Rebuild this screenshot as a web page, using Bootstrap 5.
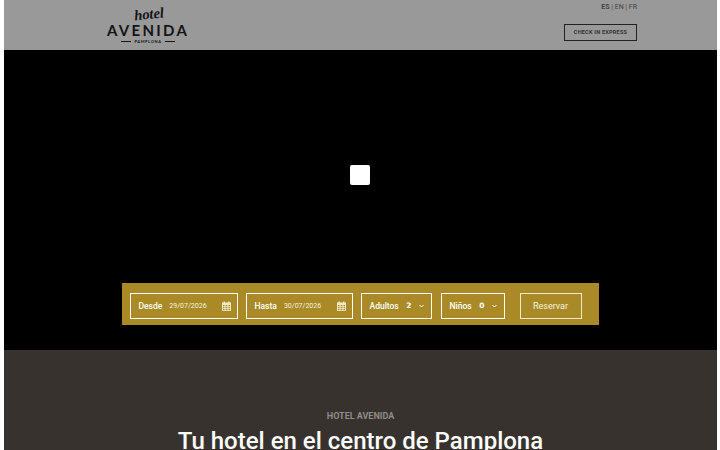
<!DOCTYPE html>
<html lang="es">
<head>
    <meta charset="UTF-8">
    <meta name="viewport" content="width=device-width, initial-scale=1.0">
    <title>Hotel Avenida Pamplona</title>
    <link href="https://cdn.jsdelivr.net/npm/bootstrap@5.3.0/dist/css/bootstrap.min.css" rel="stylesheet">
    <style>
        html, body { height: 450px; overflow: hidden; }
        body { background: #fff; font-family: Roboto, sans-serif; }
        .page-wrap { margin: 0 3px 0 4px; }
        .top-bar { height: 50px; background: #999; padding: 0 80px 0 103px; }
        .logo-box { width: 82px; color: #141414; line-height: 1; }
        .logo-hotel { font: italic 700 14.5px/15px "Liberation Serif", serif; margin-top: 7px; padding-left: 2px; transform: rotate(-6deg); }
        .logo-name { font: 700 15px/15px Lato, sans-serif; letter-spacing: 2.3px; margin-top: 1px; white-space: nowrap; }
        .logo-sub { font: 700 4px/5px Lato, sans-serif; letter-spacing: .6px; gap: 3px; margin-top: 1px; }
        .logo-sub i { width: 10px; height: 1px; background: #141414; }
        .lang-links { font-size: 7px; line-height: 9px; color: #444; margin-top: 3px; }
        .btn-express { width: 73px; height: 17px; margin-top: 12px; border: 1px solid #222; border-radius: 0; padding: 0; font-size: 5.6px; font-weight: 700; line-height: 15px; color: #333; letter-spacing: .2px; }
        .hero-box { height: 300px; background: #000; padding-bottom: 25px; position: relative; }
        .loader-box { position: absolute; left: 346px; top: 115px; width: 20px; height: 20px; background: #fff; border-radius: 2px; }
        .booking-bar { width: 477px; height: 42px; background: #a98a26; padding: 4px 0 0 8px; color: #fff; margin-left: -1px; }
        .book-field { height: 26px; border: 1px solid #fff; padding: 0 5px 0 7px; font-size: 8.5px; font-weight: 500; color: #fff; margin-right: 8px; }
        .field-from { width: 108px; }
        .field-to { width: 107px; }
        .field-num { width: 71px; margin-right: 9px; }
        .field-kids { width: 64px; margin-right: 15px; }
        .book-label { margin-left: 1px; }
        .date-value { font-size: 7px; font-weight: 400; margin-left: 7px; color: #f7f2df; }
        .num-value { font-size: 7.5px; font-weight: 700; margin-left: auto; margin-right: 7px; font-family: "DejaVu Sans", sans-serif; }
        .cal-icon { margin-left: auto; margin-right: 1px; }
        .chevron-icon { margin-right: 2px; }
        .btn-reserve { width: 62px; height: 26px; border: 1px solid #f0e8c8; border-radius: 0; padding: 0; font-size: 9px; line-height: 24px; color: #f7f2df; }
        .intro-box { height: 100px; background: #38322f; padding-top: 60px; overflow: hidden; }
        .intro-kicker { font-size: 9px; font-weight: 700; line-height: 12px; color: #8f8c8a; }
        .intro-title { font-size: 24px; font-weight: 500; line-height: 30px; color: #fff; margin: 4px 0 0; }
    </style>
</head>
<body>
    <div class="page-wrap">
        <header class="top-bar d-flex justify-content-between">
            <div class="logo-box text-center">
                <div class="logo-hotel">hotel</div>
                <div class="logo-name">AVENIDA</div>
                <div class="logo-sub d-flex justify-content-center align-items-center"><i></i>PAMPLONA<i></i></div>
            </div>
            <div class="d-flex flex-column align-items-end">
                <div class="lang-links"><b>ES</b> | EN | FR</div>
                <a href="#" class="btn btn-express text-uppercase">Check in express</a>
            </div>
        </header>

        <section class="hero-box d-flex justify-content-center align-items-end">
            <div class="loader-box"></div>
            <form class="booking-bar d-flex align-items-center">
                <div class="book-field field-from d-flex align-items-center">
                    <span class="book-label">Desde</span> <span class="date-value">29/07/2026</span>
                    <svg class="cal-icon" width="9" height="10" viewBox="0 0 9 10"><path fill="#f0e8c8" d="M0 1.500h1.500V.5h1.500v1h3v-1h1.500v1H9V10H0zM1 4v1.200h1.500V4zm2.700 0v1.200h1.600V4zm2.800 0v1.200H8V4zM1 6v1.200h1.500V6zm2.700 0v1.200h1.600V6zm2.800 0v1.200H8V6zM1 8v1.200h1.500V8zm2.700 0v1.200h1.600V8zm2.800 0v1.200H8V8z" fill-rule="evenodd"/></svg>
                </div>
                <div class="book-field field-to d-flex align-items-center">
                    <span class="book-label">Hasta</span> <span class="date-value">30/07/2026</span>
                    <svg class="cal-icon" width="9" height="10" viewBox="0 0 9 10"><path fill="#f0e8c8" d="M0 1.500h1.500V.5h1.500v1h3v-1h1.500v1H9V10H0zM1 4v1.200h1.500V4zm2.700 0v1.200h1.600V4zm2.800 0v1.200H8V4zM1 6v1.200h1.500V6zm2.700 0v1.200h1.600V6zm2.800 0v1.200H8V6zM1 8v1.200h1.500V8zm2.700 0v1.200h1.600V8zm2.800 0v1.200H8V8z" fill-rule="evenodd"/></svg>
                </div>
                <div class="book-field field-num d-flex align-items-center">
                    <span class="book-label">Adultos</span> <span class="num-value">2</span>
                    <svg class="chevron-icon" width="5" height="4" viewBox="0 0 5 4"><path fill="none" stroke="#fff" stroke-width="1" d="M.5 1l2 2 2-2"/></svg>
                </div>
                <div class="book-field field-kids d-flex align-items-center">
                    <span class="book-label">Niños</span> <span class="num-value">0</span>
                    <svg class="chevron-icon" width="5" height="4" viewBox="0 0 5 4"><path fill="none" stroke="#fff" stroke-width="1" d="M.5 1l2 2 2-2"/></svg>
                </div>
                <button type="button" class="btn btn-reserve">Reservar</button>
            </form>
        </section>

        <section class="intro-box text-center">
            <div class="intro-kicker text-uppercase">Hotel Avenida</div>
            <h1 class="intro-title">Tu hotel en el centro de Pamplona</h1>
        </section>
    </div>
    <script src="https://cdn.jsdelivr.net/npm/bootstrap@5.3.0/dist/js/bootstrap.bundle.min.js"></script>
</body>
</html>
